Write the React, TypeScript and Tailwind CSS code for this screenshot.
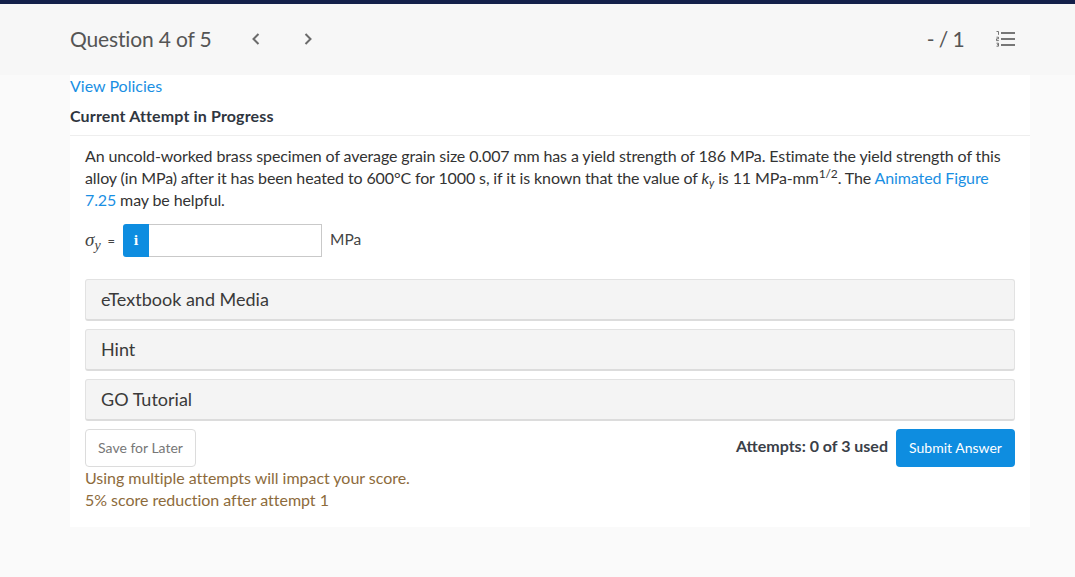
const sections = ["eTextbook and Media", "Hint", "GO Tutorial"];

export default function App() {
  return (
    <div className="min-h-[577px] bg-[#fafafa] font-['Lato',sans-serif] text-[#333]">
      <div className="h-1 bg-[#14204a]" />

      {/* question header */}
      <header className="h-[71px] bg-[#f7f7f7] pl-[70px] pr-[60px] flex items-center text-[#555]">
        <span className="text-[21px] leading-none -mt-[2px] w-[181px] tracking-[-0.15px]">Question 4 of 5</span>
        <svg className="w-2.5 h-3.5 -mt-[1px]" viewBox="0 0 10 14" fill="none" stroke="#6b6b6b" strokeWidth="2">
          <path d="M7.5 2 L2.5 7 L7.5 12" />
        </svg>
        <svg className="w-2.5 h-3.5 ml-[42px] -mt-[1px]" viewBox="0 0 10 14" fill="none" stroke="#6b6b6b" strokeWidth="2">
          <path d="M2.5 2 L7.5 7 L2.5 12" />
        </svg>
        <span className="ml-auto text-[21px] leading-none -mt-[2px] tracking-[-0.6px]">- / 1</span>
        <svg className="w-[19px] h-[16px] ml-[32px] -mt-[1px]" viewBox="0 0 19 16" fill="none">
          <path d="M5 2H19M5 8H19M5 14H19" stroke="#777" strokeWidth="2" />
          <path d="M0.5 0.5H2.5V3.8M0.5 6.2H2.5V7.8H0.5V9.6H2.8M0.5 12.2H2.5V15.2H0.5M1 13.7H2.5" stroke="#666" strokeWidth="0.9" />
        </svg>
      </header>

      <main className="mx-[70px] w-[960px] h-[452px] bg-white">
        <a className="block text-[16px] leading-[22px] text-[#1a8fe3]">View Policies</a>
        <h2 className="mt-[8px] text-[16px] leading-[22px] font-bold text-[#2f3640] pb-[8px] border-b border-[#eeeeee] tracking-[0.15px]">
          Current Attempt in Progress
        </h2>

        <div className="px-[15px]">
          <p className="mt-[9px] text-[16px] leading-[22px] text-[#333] tracking-[-0.12px]">
            An uncold-worked brass specimen of average grain size 0.007 mm has a yield strength of 186 MPa. Estimate the yield strength of this alloy (in MPa) after it has been heated to 600°C for 1000 s, if it is known that the value of{" "}
            <i>k<sub className="text-[11px]">y</sub></i> is 11 MPa-mm
            <sup className="text-[12px]">1/2</sup>. The{" "}
            <a className="text-[#1a8fe3]">Animated Figure 7.25</a> may be helpful.
          </p>

          <div className="mt-[13px] flex items-center h-[33px]">
            <span className="w-[38px] flex items-baseline text-[#444] font-['Liberation_Serif',serif] whitespace-nowrap">
              <i className="text-[19px]">σ<sub className="text-[14px]">y</sub></i>
              <span className="ml-[7px] font-['Lato',sans-serif] text-[13px]">=</span>
            </span>
            <div className="w-[26px] h-[33px] bg-[#0e8de0] rounded-l-[3px] flex items-center justify-center text-white font-['DejaVu_Serif',serif] font-bold text-[12px]">
              i
            </div>
            <div className="w-[173px] h-[33px] bg-white border border-l-0 border-[#c9c9c9]" />
            <span className="ml-[8px] -mt-[2px] text-[15.5px] text-[#444]">MPa</span>
          </div>

          <div className="mt-[22px] flex flex-col gap-[8px]">
            {sections.map((s) => (
              <div
                key={s}
                className="h-[42px] bg-[#f4f4f4] border border-[#e2e2e2] border-b-2 border-b-[#dcdcdc] rounded-[3px] pl-[15px] flex items-center text-[18px] text-[#3a3a3a]"
              >
                {s}
              </div>
            ))}
          </div>

          <div className="mt-[8px] flex items-start">
            <button className="w-[111px] h-[38px] pb-[2px] rounded-[4px] border border-[#dcdcdc] bg-white text-[14px] text-[#777]">
              Save for Later
            </button>
            <span className="ml-auto mt-[6px] text-[16px] leading-[22px] font-bold text-[#3a4048]">Attempts: 0 of 3 used</span>
            <button className="ml-[8px] w-[119px] h-[38px] pb-[2px] rounded-[4px] bg-[#0e8de0] text-[14px] text-white">
              Submit Answer
            </button>
          </div>

          <p className="text-[16px] leading-[22px] text-[#8d6b3c] tracking-[-0.03px]">
            Using multiple attempts will impact your score.
            <br />
            5% score reduction after attempt 1
          </p>
        </div>
      </main>
    </div>
  );
}
